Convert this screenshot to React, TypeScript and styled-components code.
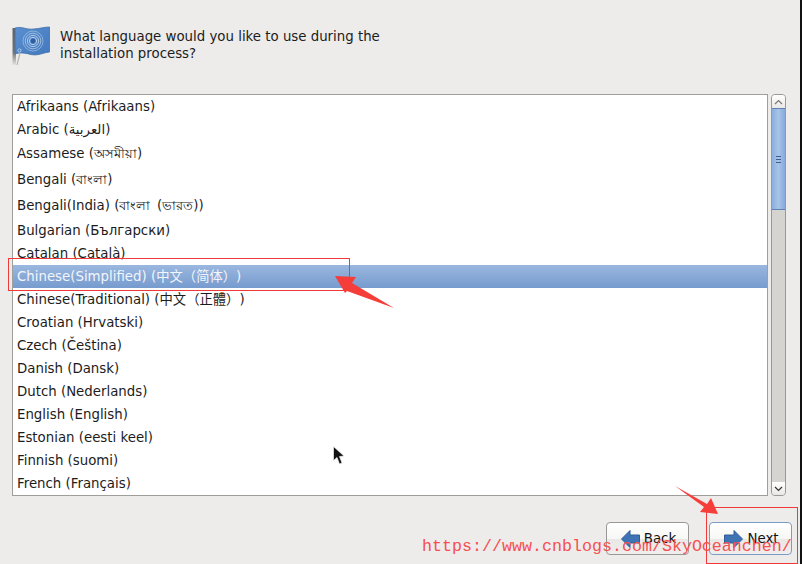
import React from "react";
import styled, { createGlobalStyle } from "styled-components";

const Global = createGlobalStyle`
  html, body { margin: 0; padding: 0; background: #edeceb; }
  #root { width: 802px; height: 564px; overflow: hidden; }
`;

const FONT = `"DejaVu Sans", "Noto Sans", "Noto Sans CJK SC", sans-serif`;

const Screen = styled.div`
  position: relative;
  width: 802px;
  height: 564px;
  box-sizing: border-box;
  background: #edeceb;
  border-right: 2px solid #111;
  font-family: ${FONT};
  font-size: 13.33px;
  color: #1c1c1c;
  text-spacing-trim: space-all;
  display: flex;
  flex-direction: column;
  padding: 28px 0 9px 12px;
  overflow: hidden;
`;

const Header = styled.header`
  display: flex;
  gap: 9px;
  height: 67px;
`;

const Question = styled.p`
  margin: 0;
  width: 340px;
  font-size: 13.33px;
  line-height: 17px;
`;

const Middle = styled.div`
  display: flex;
  height: 403px;
  gap: 3px;
  padding-right: 14px;
`;

const ListBox = styled.ul`
  flex: 1;
  margin: 0;
  padding: 0;
  list-style: none;
  background: #fff;
  border: 1px solid #a09e9b;
  overflow: hidden;
`;

const Row = styled.li<{ $h: number; $selected?: boolean }>`
  height: ${(p) => p.$h}px;
  line-height: ${(p) => p.$h}px;
  padding-left: 4px;
  white-space: pre;
  color: ${(p) => (p.$selected ? "#f2f5fa" : "#1c1c1c")};
  background: ${(p) =>
    p.$selected ? "linear-gradient(#9ab7df, #769bce)" : "transparent"};
`;

const Scrollbar = styled.div`
  width: 15px;
  box-sizing: border-box;
  display: flex;
  flex-direction: column;
  border: 1px solid #9a9895;
  border-radius: 4px;
  background: #d6d4d1;
  overflow: hidden;
`;

const StepButton = styled.div`
  height: 13px;
  flex: none;
  background: linear-gradient(#fff, #e9e8e6);
  display: flex;
  align-items: center;
  justify-content: center;
`;

const Thumb = styled.div`
  height: 102px;
  flex: none;
  box-sizing: border-box;
  background: linear-gradient(90deg, #8aaedd, #a7c3e8 50%, #86aadb);
  border-top: 1px solid #5f82b3;
  border-bottom: 1px solid #5f82b3;
  display: flex;
  flex-direction: column;
  align-items: center;
  justify-content: center;
  gap: 2px;
`;

const Grip = styled.span`
  width: 5px;
  height: 1px;
  background: #3f5f8e;
`;

const Trough = styled.div`
  flex: 1;
`;

const Footer = styled.footer`
  display: flex;
  justify-content: flex-end;
  gap: 20px;
  padding: 26px 8px 0 0;
`;

const NavButton = styled.button<{ $focused?: boolean }>`
  width: 83px;
  height: 33px;
  box-sizing: border-box;
  padding: 0 0 0 2px;
  display: flex;
  align-items: center;
  justify-content: center;
  gap: 4px;
  font-family: ${FONT};
  font-size: 13.33px;
  color: #111;
  border-radius: 4px;
  border: 1px solid ${(p) => (p.$focused ? "#7c9cc8" : "#9a9895")};
  background: linear-gradient(#ffffff 0%, #f7f7f6 50%, #e9e8e6 52%, #efeeed 100%);
`;

const Overlay = styled.svg`
  position: absolute;
  left: 0;
  top: 0;
  width: 802px;
  height: 564px;
  pointer-events: none;
`;

const Watermark = styled.span`
  position: absolute;
  left: 422px;
  top: 537px;
  font-family: "Liberation Mono", monospace;
  font-size: 16.67px;
  line-height: 20px;
  color: #f65050;
  white-space: nowrap;
`;

const rows: [string, number][] = [
  ["Afrikaans (Afrikaans)", 23],
  ["Arabic (العربية)", 23],
  ["Assamese (অসমীয়া)", 26],
  ["Bengali (বাংলা)", 26],
  ["Bengali(India) (বাংলা\u2002(ভারত))", 26],
  ["Bulgarian (Български)", 23],
  ["Catalan (Català)", 23],
  ["Chinese(Simplified) (中文（简体）)", 23],
  ["Chinese(Traditional) (中文（正體）)", 23],
  ["Croatian (Hrvatski)", 23],
  ["Czech (Čeština)", 23],
  ["Danish (Dansk)", 23],
  ["Dutch (Nederlands)", 23],
  ["English (English)", 23],
  ["Estonian (eesti keel)", 23],
  ["Finnish (suomi)", 23],
  ["French (Français)", 23],
];

const Flag = () => (
  <svg width="39" height="40" viewBox="0 0 39 40" style={{ flex: "none", marginTop: -2 }}>
    <defs>
      <linearGradient id="flagBlue" x1="0" y1="0" x2="1" y2="1">
        <stop offset="0" stopColor="#5a90d0" />
        <stop offset="1" stopColor="#4379bd" />
      </linearGradient>
      <linearGradient id="pole" x1="0" y1="0" x2="0" y2="1">
        <stop offset="0" stopColor="#64635f" />
        <stop offset="0.65" stopColor="#74736f" />
        <stop offset="1" stopColor="#e4e3e1" />
      </linearGradient>
    </defs>
    <rect x="0.5" y="2" width="3.5" height="37" fill="url(#pole)" />
    <path
      d="M3 2 C10 0 14 4 22 3 C28 2.5 33 1 37.5 1 L37.5 26 C30 27 26 30 19 28.5 C13 27 8 26 3 28 Z"
      fill="url(#flagBlue)"
      stroke="#3d6eac"
      strokeWidth="0.8"
    />
    <g fill="none" stroke="#bcd3ee" strokeWidth="1">
      <circle cx="21" cy="15" r="10" opacity="0.55" />
      <circle cx="21" cy="15" r="7.8" opacity="0.7" />
      <circle cx="21" cy="15" r="5.6" opacity="0.85" />
      <circle cx="21" cy="15" r="3.6" />
    </g>
    <circle cx="21" cy="15" r="2.4" fill="#2f5f9f" />
    <path d="M8 27 L5 39" stroke="#b5b4b1" strokeWidth="1.2" />
    <circle cx="7.5" cy="24.5" r="1.6" fill="#4f86c9" stroke="#d8e4f2" strokeWidth="0.7" />
  </svg>
);

const BackArrow = () => (
  <svg width="19" height="18" viewBox="0 0 19 18">
    <path d="M0.5 9 L9 0.5 V5 H18.5 V13 H9 V17.5 Z" fill="#3f74b4" stroke="#2f5d98" />
  </svg>
);

const NextArrow = () => (
  <svg width="19" height="18" viewBox="0 0 19 18">
    <path d="M18.5 9 L10 0.5 V5 H0.5 V13 H10 V17.5 Z" fill="#3f74b4" stroke="#2f5d98" />
  </svg>
);

export default function App() {
  return (
    <Screen>
      <Global />
      <Header>
        <Flag />
        <Question>
          What language would you like to use during the
          <br />
          installation process?
        </Question>
      </Header>
      <Middle>
        <ListBox>
          {rows.map(([label, h], i) => (
            <Row key={label} $h={h} $selected={i === 7}>
              {label}
            </Row>
          ))}
        </ListBox>
        <Scrollbar>
          <StepButton>
            <svg width="9" height="6" viewBox="0 0 9 6">
              <path d="M1 5 L4.5 1.5 L8 5" fill="none" stroke="#777" strokeWidth="1.2" />
            </svg>
          </StepButton>
          <Thumb>
            <Grip />
            <Grip />
            <Grip />
          </Thumb>
          <Trough />
          <StepButton>
            <svg width="9" height="6" viewBox="0 0 9 6">
              <path d="M1 1 L4.5 4.5 L8 1" fill="none" stroke="#333" strokeWidth="1.2" />
            </svg>
          </StepButton>
        </Scrollbar>
      </Middle>
      <Footer>
        <NavButton>
          <BackArrow />
          Back
        </NavButton>
        <NavButton $focused>
          <NextArrow />
          Next
        </NavButton>
      </Footer>
      <Overlay viewBox="0 0 802 564">
        <rect x="8.5" y="258.5" width="341" height="32" fill="none" stroke="#f03a3a" strokeWidth="1" />
        <rect x="706.5" y="507.5" width="91" height="56" fill="none" stroke="#f03a3a" strokeWidth="1" />
        <path d="M335 276 L356 277 L352 283 L394 308 L347 291 L345 293 Z" fill="#f53d3a" />
        <path d="M675 486 L707 504 L711 498 L718 514 L700 512 L704 507 Z" fill="#f53d3a" />
        <path
          d="M333.5 446.5 V460.5 L337 457.5 L339.5 464 L342 463 L339.5 456.5 L344 456 Z"
          fill="#111"
          stroke="#eee"
          strokeWidth="0.7"
        />
      </Overlay>
      <Watermark>https://www.cnblogs.com/SkyOceanchen/</Watermark>
    </Screen>
  );
}
